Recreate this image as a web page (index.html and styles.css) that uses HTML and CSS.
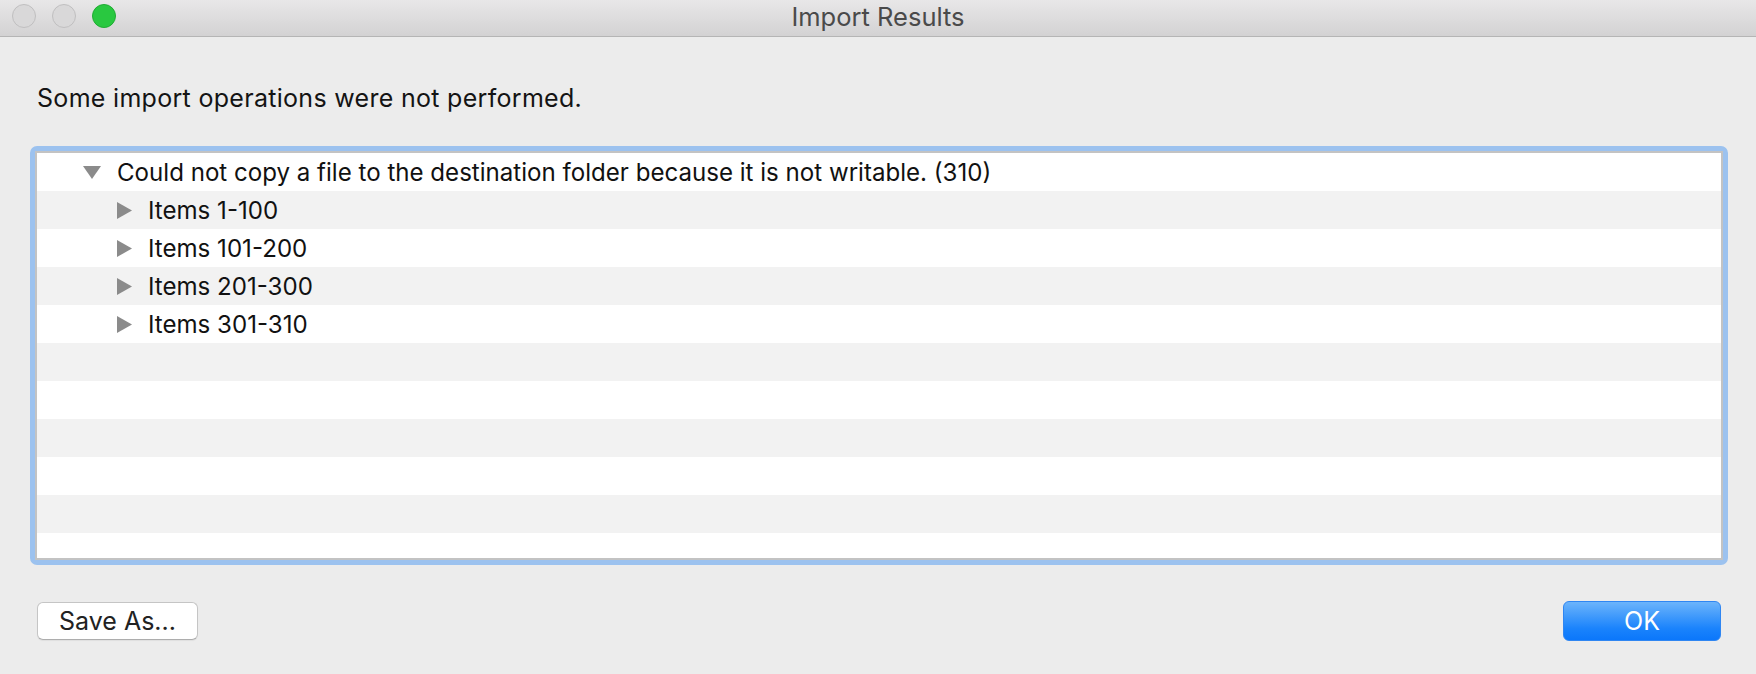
FILE: index.html
```html
<!DOCTYPE html>
<html>
<head>
<meta charset="utf-8">
<title>Import Results</title>
<link rel="stylesheet" href="styles.css">
</head>
<body>
<div class="window">
  <header class="titlebar">
    <div class="lights">
      <span class="light light-gray"></span>
      <span class="light light-gray"></span>
      <span class="light light-green"></span>
    </div>
    <div class="title">Import Results</div>
    <div class="spacer"></div>
  </header>
  <main class="content">
    <p class="message">Some import operations were not performed.</p>
    <div class="focus-ring">
      <div class="list">
        <div class="row">
          <span class="tri level-0"><svg width="18" height="13" viewBox="0 0 18 13"><path d="M0 0 H18 L9 13 Z" fill="#8b8b8b"/></svg></span>
          <span class="label">Could not copy a file to the destination folder because it is not writable. (310)</span>
        </div>
        <div class="row">
          <span class="tri level-1"><svg width="15" height="17" viewBox="0 0 15 17"><path d="M0 0 L15 8.5 L0 17 Z" fill="#8b8b8b"/></svg></span>
          <span class="label">Items 1-100</span>
        </div>
        <div class="row">
          <span class="tri level-1"><svg width="15" height="17" viewBox="0 0 15 17"><path d="M0 0 L15 8.5 L0 17 Z" fill="#8b8b8b"/></svg></span>
          <span class="label">Items 101-200</span>
        </div>
        <div class="row">
          <span class="tri level-1"><svg width="15" height="17" viewBox="0 0 15 17"><path d="M0 0 L15 8.5 L0 17 Z" fill="#8b8b8b"/></svg></span>
          <span class="label">Items 201-300</span>
        </div>
        <div class="row">
          <span class="tri level-1"><svg width="15" height="17" viewBox="0 0 15 17"><path d="M0 0 L15 8.5 L0 17 Z" fill="#8b8b8b"/></svg></span>
          <span class="label">Items 301-310</span>
        </div>
        <div class="row"></div>
        <div class="row"></div>
        <div class="row"></div>
        <div class="row"></div>
        <div class="row"></div>
        <div class="row"></div>
      </div>
    </div>
    <div class="footer">
      <button class="btn btn-secondary">Save As...</button>
      <button class="btn btn-primary">OK</button>
    </div>
  </main>
</div>
</body>
</html>
```
FILE: styles.css
```css
* { box-sizing: border-box; }
html, body { margin: 0; padding: 0; }
body {
  width: 1756px;
  height: 674px;
  overflow: hidden;
  background: #ececec;
  font-family: Inter, "Noto Sans", "Liberation Sans", sans-serif;
  color: #1b1b1b;
}
.window { width: 1756px; height: 674px; display: flex; flex-direction: column; }

.titlebar {
  height: 37px;
  flex: none;
  display: grid;
  grid-template-columns: 1fr auto 1fr;
  background: linear-gradient(#e8e7e8, #d3d2d3);
  border-bottom: 1px solid #b5b5b5;
}
.lights { display: flex; gap: 16px; padding: 4px 0 0 12px; align-items: flex-start; }
.light { width: 24px; height: 24px; border-radius: 50%; display: block; }
.light-gray { background: #d9d8d9; border: 1px solid #c0bfc0; }
.light-green { background: #29c840; border: 1px solid #20ac33; }
.title {
  font-size: 25.5px;
  line-height: 34px;
  color: #4a4a4a;
}

.content { flex: 1; padding: 46px 28px 0 30px; display: flex; flex-direction: column; }
.message {
  margin: 0 0 0 7px;
  font-size: 25px;
  letter-spacing: 0.3px;
  line-height: 30px;
  color: #141414;
}
.focus-ring {
  margin-top: 33px;
  height: 419px;
  border: 5px solid #9cc2ef;
  border-radius: 7px;
}
.list {
  height: 100%;
  border: 2px solid #c3c3c3;
  background: #fff;
  overflow: hidden;
}
.row {
  height: 38px;
  display: flex;
  align-items: center;
  font-size: 24.1px;
  color: #111;
}
.row:nth-child(even) { background: #f2f2f2; }
.tri { display: flex; align-items: center; }
.level-0 { margin-left: 46px; width: 34px; }
.level-1 { margin-left: 80px; width: 31px; }
.label { white-space: nowrap; }

.footer {
  margin-top: 36px;
  display: flex;
  justify-content: space-between;
  align-items: center;
  padding: 0 7px 0 7px;
}
.btn {
  font-family: inherit;
  font-size: 25px;
  border-radius: 6px;
  padding: 0;
}
.btn-secondary {
  width: 161px;
  height: 38px;
  background: #fff;
  color: #222;
  border: 1px solid #c5c5c5;
  border-bottom-color: #adadad;
  box-shadow: 0 1px 1px rgba(0,0,0,0.06);
}
.btn-primary {
  width: 158px;
  height: 40px;
  color: #fff;
  border: 1px solid #2f86f2;
  background: linear-gradient(#6cb4fb, #1a83fc 70%, #0b77fb);
}
```
